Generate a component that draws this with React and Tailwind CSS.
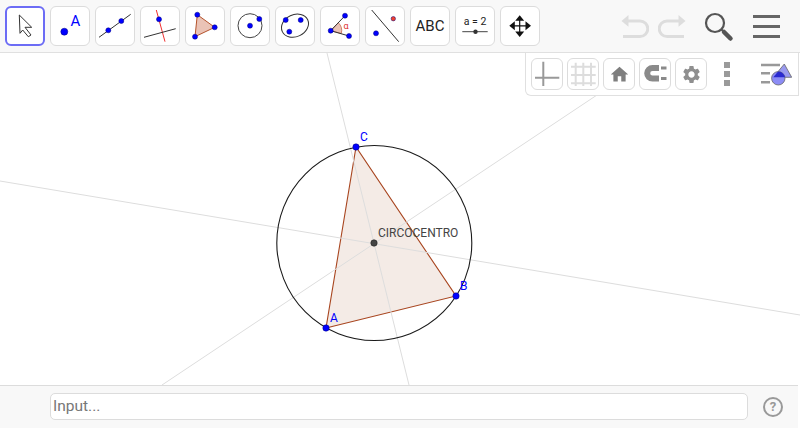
import { MdHome, MdSettings } from "react-icons/md";

const BLUE = "#0000ff";

function Dot({ x, y, r = 3, fill = BLUE }) {
  return <circle cx={x} cy={y} r={r} fill={fill} stroke="#00007a" strokeWidth="0.5" />;
}

function ToolBtn({ active, children }) {
  return (
    <div
      className={
        active
          ? "w-10 h-10 rounded-md border-2 border-[#6c6cf5] bg-white"
          : "w-10 h-10 rounded-md border border-[#dcdcdc] bg-white"
      }
    >
      <svg
        viewBox="-1 0 40 40"
        className={active ? "w-10 h-10 -m-0.5" : "w-10 h-10 -m-px"}
      >
        {children}
      </svg>
    </div>
  );
}

function StyleBtn({ children }) {
  return (
    <div className="w-8 h-8 rounded-md border border-[#dcdcdc] bg-white flex items-center justify-center overflow-hidden">
      {children}
    </div>
  );
}

function UndoIcon({ flip }) {
  return (
    <svg viewBox="0 0 28 24" className={flip ? "w-7 h-6 -scale-x-100" : "w-7 h-6"}>
      <polygon points="0.5,5.9 7.5,0 7.5,11.8" fill="#dddddd" />
      <path d="M7 5.9 H19 A7.8 7.8 0 0 1 19 21.5 H2" stroke="#dddddd" strokeWidth="3" fill="none" />
    </svg>
  );
}

function Toolbar() {
  return (
    <div className="h-[53px] shrink-0 bg-[#f8f8f8] border-b border-[#e0e0e0] flex items-start pt-1.5 pl-[5px]">
      <div className="flex gap-[5px]">
        <ToolBtn active>
          <path d="M13.3 9 L25.7 21.3 H19 L25 29 L22.3 30.7 L16.7 24 L14 27.3 Z" fill="#fff" stroke="#333" strokeWidth="1" />
        </ToolBtn>
        <ToolBtn>
          <Dot x={13.3} y={25.7} r={3.5} />
          <text x="19.5" y="20" fontSize="15" fill={BLUE} fontFamily="Roboto, sans-serif">A</text>
        </ToolBtn>
        <ToolBtn>
          <line x1="3" y1="31.3" x2="34.7" y2="8.3" stroke="#333" />
          <Dot x={12.3} y={24.3} r={2.5} />
          <Dot x={25.3} y={15} r={2.5} />
        </ToolBtn>
        <ToolBtn>
          <line x1="15.3" y1="4" x2="24" y2="35.7" stroke="#f03030" />
          <line x1="3" y1="31.3" x2="34.7" y2="22.7" stroke="#333" />
          <Dot x={18} y={13.3} r={2.5} />
        </ToolBtn>
        <ToolBtn>
          <polygon points="11.3,8.7 28.7,21.3 9,30.7" fill="#eac3b6" stroke="#b5532c" />
          <Dot x={11.3} y={8.7} r={2.5} />
          <Dot x={28.7} y={21.3} r={2.5} />
          <Dot x={9} y={30.7} r={2.5} />
        </ToolBtn>
        <ToolBtn>
          <circle cx="19" cy="19.7" r="12" fill="none" stroke="#444" />
          <Dot x={19} y={19.7} r={2.5} />
          <Dot x={28.3} y={13} r={2.5} />
        </ToolBtn>
        <ToolBtn>
          <ellipse cx="19" cy="19.7" rx="14" ry="11" transform="rotate(-25 19 19.7)" fill="none" stroke="#333" />
          <Dot x={9.7} y={14} r={2.5} />
          <Dot x={24.7} y={14} r={2.5} />
          <Dot x={13.3} y={25.7} r={2.5} />
        </ToolBtn>
        <ToolBtn>
          <path d="M9.7 24.7 L17.3 16.7 A11 11 0 0 1 20.3 27.5 Z" fill="#eac3b6" stroke="#c0593a" strokeWidth="0.7" />
          <line x1="9.7" y1="24.7" x2="24" y2="9.7" stroke="#333" />
          <line x1="9.7" y1="24.7" x2="28" y2="30" stroke="#333" />
          <Dot x={9.7} y={24.7} r={2.5} />
          <Dot x={24} y={9.7} r={2.5} />
          <Dot x={28} y={30} r={2.5} />
          <text x="22.5" y="22.5" fontSize="9" fill="#e03030" fontFamily="Roboto, sans-serif">α</text>
        </ToolBtn>
        <ToolBtn>
          <line x1="5.7" y1="4" x2="32.7" y2="35.7" stroke="#333" />
          <Dot x={10} y={27.3} r={2.5} />
          <Dot x={27.3} y={12.7} r={2.2} fill="#f04030" />
        </ToolBtn>
        <ToolBtn>
          <text x="19" y="25" textAnchor="middle" fontSize="15" fill="#222" fontFamily="Roboto, sans-serif">ABC</text>
        </ToolBtn>
        <ToolBtn>
          <text x="19" y="19" textAnchor="middle" fontSize="10.5" fill="#222" fontFamily="Roboto, sans-serif">a = 2</text>
          <line x1="6.3" y1="25.7" x2="31.7" y2="25.7" stroke="#444" />
          <circle cx="19.5" cy="25.7" r="2.2" fill="#333" />
        </ToolBtn>
        <ToolBtn>
          <path d="M18.7 9.3 L23.2 14.8 H14.2 Z M18.7 31 L23.2 25.5 H14.2 Z M8.3 19.8 L13.8 15.3 V24.3 Z M30 19.8 L24.5 15.3 V24.3 Z" fill="#111" />
          <path d="M18.7 13 V27 M12 19.8 H26" stroke="#111" strokeWidth="1.2" />
        </ToolBtn>
      </div>
      <div className="flex items-center justify-between ml-[81px] mt-[9px] w-[65px]">
        <UndoIcon />
        <UndoIcon flip />
      </div>
      <svg viewBox="0 0 30 30" className="w-[30px] h-[30px] ml-[18px] mt-1.5">
        <circle cx="11" cy="11" r="9" fill="none" stroke="#555" strokeWidth="2.2" />
        <line x1="17.5" y1="17.5" x2="20" y2="20" stroke="#555" strokeWidth="2" />
        <line x1="20" y1="20" x2="26.5" y2="26.5" stroke="#555" strokeWidth="4.5" strokeLinecap="round" />
      </svg>
      <div className="ml-[19px] mt-[9px] w-[27px] flex flex-col gap-[7px]">
        <div className="h-[3px] bg-[#666666]" />
        <div className="h-[3px] bg-[#666666]" />
        <div className="h-[3px] bg-[#666666]" />
      </div>
    </div>
  );
}

function StylePanel() {
  return (
    <div className="absolute top-0 right-px w-[274px] h-[43px] bg-white border border-t-0 border-[#e0e0e0] rounded-bl-md flex items-start pt-[5px] pl-[5px]">
      <div className="flex gap-1">
        <StyleBtn>
          <svg viewBox="0 0 32 32" className="w-8 h-8 shrink-0">
            <path d="M12.3 3.7 V28 M4 19.7 H28.3" stroke="#999999" strokeWidth="2" fill="none" />
          </svg>
        </StyleBtn>
        <StyleBtn>
          <svg viewBox="0 0 32 32" className="w-8 h-8 shrink-0">
            <path d="M8.7 4.7 V28 M16.3 4.7 V28 M24 4.7 V28 M4 8.7 H28.7 M4 17 H28.7 M4 25.3 H28.7" stroke="#dddddd" strokeWidth="2" fill="none" />
          </svg>
        </StyleBtn>
        <StyleBtn>
          <MdHome className="w-[21px] h-[21px] text-[#7f7f7f]" />
        </StyleBtn>
        <StyleBtn>
          <svg viewBox="0 0 32 32" className="w-8 h-8 shrink-0">
            <path d="M20 10 H13.5 A5.3 5.3 0 0 0 13.5 20.6 H20" stroke="#8a8a8a" strokeWidth="6" fill="none" />
            <path d="M22 8.5 H27.5 V11.5 H22 Z M22 19 H27.5 V22 H22 Z" fill="#8a8a8a" />
          </svg>
        </StyleBtn>
        <StyleBtn>
          <MdSettings className="w-[21px] h-[21px] text-[#8f8f8f]" />
        </StyleBtn>
      </div>
      <div className="ml-[17px] mt-1 w-1.5 flex flex-col gap-[3px]">
        <div className="h-1.5 bg-[#9a9a9a]" />
        <div className="h-1.5 bg-[#9a9a9a]" />
        <div className="h-1.5 bg-[#9a9a9a]" />
      </div>
      <svg viewBox="0 0 32 32" className="w-8 h-8 ml-[30px]">
        <defs>
          <clipPath id="styleTri">
            <polygon points="24.3,6 31.7,19.3 13.3,19.3" />
          </clipPath>
        </defs>
        <path d="M1 7 H20 M1 15.3 H10 M1 24.3 H10" stroke="#999999" strokeWidth="2.4" fill="none" />
        <polygon points="24.3,6 31.7,19.3 13.3,19.3" fill="#9a9af0" stroke="#666" strokeWidth="0.8" />
        <circle cx="18.3" cy="20.3" r="6.7" fill="#8c8cf5" stroke="#666" strokeWidth="0.8" />
        <circle cx="18.3" cy="20.3" r="6.7" fill="#2a2ad0" clipPath="url(#styleTri)" />
      </svg>
    </div>
  );
}

function Construction() {
  return (
    <svg viewBox="0 53 800 332" className="block w-[800px] h-[332px]">
      <polygon points="326,328 456,296 356,147" fill="#f4ebe6" stroke="#a8451f" strokeWidth="1.1" />
      <line x1="327" y1="53" x2="409" y2="385" stroke="#dddddd" />
      <line x1="0" y1="181" x2="800" y2="315" stroke="#dddddd" />
      <line x1="162" y1="385" x2="597" y2="95" stroke="#dddddd" />
      <circle cx="374.3" cy="243" r="97.5" fill="none" stroke="#1a1a1a" strokeWidth="1.1" />
      <Dot x={326} y={328} r={3.2} />
      <Dot x={456} y={296} r={3.2} />
      <Dot x={356} y={147} r={3.2} />
      <circle cx="374" cy="243" r="3.2" fill="#444" stroke="#222" strokeWidth="0.6" />
      <g fontFamily="Roboto, sans-serif" fontSize="12">
        <text x="330" y="322" fill={BLUE}>A</text>
        <text x="460" y="290" fill={BLUE}>B</text>
        <text x="360" y="141" fill={BLUE}>C</text>
        <text x="378" y="237" fill="#444">CIRCOCENTRO</text>
      </g>
    </svg>
  );
}

function InputBar() {
  return (
    <div className="h-[43px] mb-0.5 mr-0.5 shrink-0 bg-[#f8f8f8] border-t border-[#dcdcdc] flex items-start pt-[7px] pl-[50px]">
      <div className="w-[698px] h-[27px] bg-white border border-[#dcdcdc] rounded-[5px] flex items-center pl-0.5 text-[15.5px] text-[#777777]">
        Input...
      </div>
      <div className="ml-[15px] mt-[4px] w-5 h-5 rounded-full border-2 border-[#999999] flex items-center justify-center text-[13px] font-bold text-[#999999]">
        ?
      </div>
    </div>
  );
}

export default function App() {
  return (
    <div className="w-[800px] h-[430px] bg-white flex flex-col overflow-hidden font-['Roboto',sans-serif]">
      <Toolbar />
      <div className="relative flex-1">
        <Construction />
        <StylePanel />
      </div>
      <InputBar />
    </div>
  );
}
